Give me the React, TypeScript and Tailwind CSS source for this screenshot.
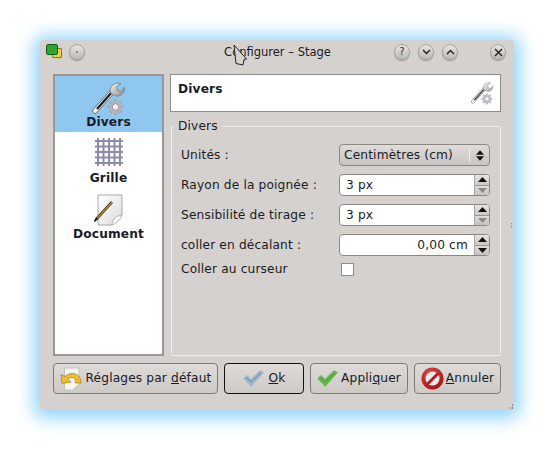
import React from "react";

function WrenchGear({ size = 34, id = "wg" }: { size?: number; id?: string }) {
  return (
    <svg width={size} height={size} viewBox="0 0 34 34" className="block">
      <defs>
        <linearGradient id={id} x1="0" y1="0" x2="1" y2="1">
          <stop offset="0" stopColor="#f4f4f4" />
          <stop offset="1" stopColor="#8e8e8e" />
        </linearGradient>
      </defs>
      <path d="M3 29 L21 9" stroke="#6d6d6d" strokeWidth="5.5" strokeLinecap="round" />
      <path d="M3 29 L21 9" stroke="#f2f2f2" strokeWidth="4" strokeLinecap="round" />
      <path d="M5 27 L20 10" stroke="#1d1d1d" strokeWidth="2.2" />
      <path d="M18.5 11 C17 6 20 1.5 26 1 L29 1.5 L24.5 5 L25.5 8.5 L29.5 9.5 L32 5.5 C33 10 30 14.5 24 14 Z" fill={`url(#${id})`} stroke="#777" strokeWidth="0.8" />
      <g transform="translate(23.5 25)">
        {[0, 45, 90, 135].map((a) => (
          <rect key={a} x="-1.6" y="-8" width="3.2" height="16" fill="#a9a9b3" transform={`rotate(${a})`} />
        ))}
        <circle r="6" fill="#b2b2bb" />
        <circle r="3.2" fill="#f4f4f4" stroke="#8a8a92" strokeWidth="0.8" />
      </g>
    </svg>
  );
}

function GridIcon() {
  const p = [3, 8.5, 14, 19.5, 25];
  return (
    <svg width="28" height="28" viewBox="0 0 28 28" className="block">
      {p.map((v) => (
        <path key={v} d={`M${v} 0V28M0 ${v}H28`} stroke="#8b8baa" strokeWidth="2" />
      ))}
    </svg>
  );
}

function DocIcon() {
  return (
    <svg width="30" height="32" viewBox="0 0 30 32" className="block">
      <defs>
        <linearGradient id="dg" x1="0" y1="0" x2="1" y2="1">
          <stop offset="0" stopColor="#ffffff" />
          <stop offset="1" stopColor="#dcdcdc" />
        </linearGradient>
      </defs>
      <path d="M4 1H28V21L18 31H4Z" fill="url(#dg)" stroke="#a8a8a8" />
      <path d="M18 31C18 26 21 22 28 21C26 26 23 29 18 31Z" fill="#f8f8f8" stroke="#b0b0b0" />
      <path d="M2 25.5L18 8" stroke="#3a3320" strokeWidth="2.6" />
      <path d="M2.5 25L18 8.2" stroke="#d2a52a" strokeWidth="1.1" />
      <path d="M0.5 27.5L3 24" stroke="#111" strokeWidth="1.6" />
    </svg>
  );
}

function UndoIcon() {
  return (
    <svg width="24" height="24" viewBox="0 0 24 24" className="block">
      <path d="M4.5 1H19V17L13 23H4.5Z" fill="#f6f5f2" stroke="#c4c2be" />
      <path d="M21 16C21 9 17 6.5 12 6.5C9 6.5 6.5 8 5 9.5L1 7.5L2 16.5L11 15L7.5 12.5C9 11 10.5 10.5 12 10.5C15 10.5 15.5 13 15.5 16Z" fill="#eebb33" stroke="#a67f18" strokeWidth="0.7" />
    </svg>
  );
}

function Check({ c1, c2, edge }: { c1: string; c2: string; edge: string }) {
  return (
    <svg width="21" height="17" viewBox="0 0 21 17" className="block">
      <path d="M0.8 8.5L4 5.5L8 9.5L17 0.8L20.3 2.5L8.2 16.2Z" fill={c1} stroke={edge} strokeWidth="0.7" />
      <path d="M2.5 8.3L4 7L8 11L17 2.5L18.5 3L8.2 13.5Z" fill={c2} />
    </svg>
  );
}

function StopIcon() {
  return (
    <svg width="23" height="23" viewBox="0 0 23 23" className="block">
      <defs>
        <radialGradient id="sg" cx="0.4" cy="0.3" r="0.8">
          <stop offset="0" stopColor="#e24a4a" />
          <stop offset="1" stopColor="#9c0f0f" />
        </radialGradient>
      </defs>
      <circle cx="11.5" cy="11.5" r="11" fill="url(#sg)" />
      <circle cx="11.5" cy="11.5" r="7" fill="#ececec" />
      <path d="M5.5 16L16 5.5L18 7.5L7.5 18Z" fill="#b41818" />
    </svg>
  );
}

function WinBtn({ children }: { children?: React.ReactNode }) {
  return (
    <div className="w-[16px] h-[16px] rounded-full border border-[#a8a5a1] bg-gradient-to-b from-[#e6e4e1] to-[#bdb9b5] flex items-center justify-center shadow-[0_1px_1px_#9a9794]">
      {children}
    </div>
  );
}

function Tri({ up, dim, w = 9 }: { up?: boolean; dim?: boolean; w?: number }) {
  return (
    <svg width={w} height="5" viewBox="0 0 9 5" className="block">
      <path d={up ? "M4.5 0L9 5H0Z" : "M0 0H9L4.5 5Z"} fill={dim ? "#8c8a88" : "#111"} />
    </svg>
  );
}

function Spin({ value, right, dimDown }: { value: string; right?: boolean; dimDown?: boolean }) {
  return (
    <div className="w-[151px] h-[22px] rounded-[4px] border border-[#8b8884] bg-white flex overflow-hidden">
      <div className={`flex-1 flex items-center ${right ? "justify-end pr-[6px]" : "pl-[6px]"}`}>{value}</div>
      <div className="w-[15px] border-l border-[#a9a6a2] flex flex-col bg-[#d6d2cf]">
        <div className="flex-1 flex items-center justify-center bg-gradient-to-b from-[#e8e6e3] to-[#cbc7c3]">
          <Tri up />
        </div>
        <div className="h-px bg-[#9a9793]" />
        <div className="flex-1 flex items-center justify-center bg-gradient-to-b from-[#dedbd8] to-[#c6c2be]">
          <Tri dim={dimDown} />
        </div>
      </div>
    </div>
  );
}

function Row({ label, children }: { label: string; children: React.ReactNode }) {
  return (
    <div className="h-[22px] flex items-center justify-between">
      <span>{label}</span>
      {children}
    </div>
  );
}

function Btn({ width, dark, children }: { width: string; dark?: boolean; children: React.ReactNode }) {
  return (
    <div className={`${width} h-[31px] rounded-[4px] border ${dark ? "border-[#111]" : "border-[#7f7c78]"} bg-gradient-to-b from-[#dedbd8] to-[#cdc9c5] flex items-center justify-center gap-[2px]`}>
      {children}
    </div>
  );
}

function NavItem({ label, active, children, cls }: { label: string; active?: boolean; children: React.ReactNode; cls: string }) {
  return (
    <div className={`flex flex-col items-center font-bold ${cls} ${active ? "bg-[#8fc7ee]" : ""}`}>
      {children}
      <span className="leading-[15px]">{label}</span>
    </div>
  );
}

export default function App() {
  return (
    <div className="w-[554px] h-[450px] bg-white pt-[40px] pl-[40px] text-[12.2px] tracking-[0.15px] text-[#1b1b26]" style={{ fontFamily: '"DejaVu Sans", sans-serif' }}>
      <div className="relative w-[474px] h-[370px] rounded-[4px] bg-[#d5d1ce] shadow-[0_2px_18px_6px_#8fd3fb] px-[13px] flex flex-col">
        {/* Title bar */}
        <div className="h-[34px] -mx-[6px] flex items-start pt-[3px] relative">
          <div className="w-[16px] h-[16px] relative -ml-[1px] mt-px">
            <div className="absolute left-[6px] top-[4px] w-[10px] h-[10px] bg-[#f0cf4a] border border-[#8a7420] rounded-[1px]" />
            <div className="absolute left-0 top-0 w-[12px] h-[11px] bg-[#2fa52f] border border-[#156015] rounded-[2px]" />
          </div>
          <div className="ml-[7px] mt-px">
            <WinBtn><div className="w-[2px] h-[2px] rounded-full bg-[#777]" /></WinBtn>
          </div>
          <div className="flex-1 text-center text-[11.5px] tracking-normal leading-[16px] ml-[78px] mt-px">Configurer – Stage</div>
          <div className="flex items-center gap-[8px] mt-px ml-[2px]">
            <WinBtn><span className="text-[10px] leading-none text-[#333]">?</span></WinBtn>
            <WinBtn>
              <svg width="9" height="6" viewBox="0 0 9 6"><path d="M1 1L4.5 4.5L8 1" fill="none" stroke="#222" strokeWidth="1.4" /></svg>
            </WinBtn>
            <WinBtn>
              <svg width="9" height="6" viewBox="0 0 9 6"><path d="M1 5L4.5 1.5L8 5" fill="none" stroke="#222" strokeWidth="1.4" /></svg>
            </WinBtn>
            <div className="ml-[24px] mr-[1px]">
              <WinBtn>
                <svg width="9" height="9" viewBox="0 0 9 9"><path d="M1 1L8 8M8 1L1 8" fill="none" stroke="#222" strokeWidth="1.4" /></svg>
              </WinBtn>
            </div>
          </div>
        </div>

        {/* Body */}
        <div className="h-[282px] flex gap-[6px]">
          <div className="w-[111px] border-2 border-[#9a9794] bg-white flex flex-col">
            <NavItem label="Divers" active cls="h-[56px]">
              <div className="pt-[6px] -mb-px"><WrenchGear /></div>
            </NavItem>
            <NavItem label="Grille" cls="">
              <div className="pt-[6px] pb-[5px]"><GridIcon /></div>
            </NavItem>
            <NavItem label="Document" cls="">
              <div className="pt-[8px] pb-[1px]"><DocIcon /></div>
            </NavItem>
          </div>

          <div className="flex-1 flex flex-col">
            <div className="h-[38px] border border-[#8f8c88] bg-white flex justify-between pl-[7px] pr-[6px]">
              <span className="font-bold leading-[15px] mt-[7px]">Divers</span>
              <div className="self-end mb-[6px] opacity-80"><WrenchGear size={23} id="wg2" /></div>
            </div>
            <fieldset className="ml-px mt-[7px] flex-1 border border-[#efedeb] rounded-[2px] pl-[9px] pr-[10px] min-h-0">
              <legend className="-ml-[7px] px-[4px] leading-[14px]">Divers</legend>
              <div className="flex flex-col gap-[8px] mt-[11px]">
                <Row label="Unités :">
                  <div className="w-[151px] h-[22px] rounded-[4px] border border-[#8b8884] bg-gradient-to-b from-[#dfdcd9] to-[#c9c5c1] flex items-center pl-[4px]">
                    <span className="flex-1">Centimètres (cm)</span>
                    <div className="w-[20px] h-[14px] border-l border-[#eeecea] flex flex-col items-center justify-center gap-[1px]">
                      <Tri up w={8} />
                      <Tri w={8} />
                    </div>
                  </div>
                </Row>
                <Row label="Rayon de la poignée :"><Spin value="3 px" dimDown /></Row>
                <Row label="Sensibilité de tirage :"><Spin value="3 px" dimDown /></Row>
                <Row label="coller en décalant :"><Spin value="0,00 cm" right /></Row>
                <div className="h-[14px] -mt-[2px] flex items-center">
                  <span className="w-[160px]">Coller au curseur</span>
                  <div className="w-[13px] h-[13px] border border-[#8f8c88] bg-white" />
                </div>
              </div>
            </fieldset>
          </div>
        </div>

        {/* Buttons */}
        <div className="mt-[7px] flex justify-between">
          <Btn width="w-[165px]">
            <UndoIcon />
            <span>Réglages par <u>d</u>éfaut</span>
          </Btn>
          <Btn width="w-[80px]" dark>
            <Check c1="#a9bdd3" c2="#7e9bba" edge="#8fa4ba" />
            <span className="ml-[3px]"><u>O</u>k</span>
          </Btn>
          <Btn width="w-[98px]">
            <Check c1="#74c254" c2="#4fa535" edge="#4b9a34" />
            <span className="ml-[1px]">Appli<u>q</u>uer</span>
          </Btn>
          <Btn width="w-[87px]">
            <StopIcon />
            <span><u>A</u>nnuler</span>
          </Btn>
        </div>

        {/* Resize grip */}
        <div className="absolute right-[1px] bottom-[1px] w-[5px] h-[5px] grid grid-cols-3 gap-px">
          <span /><span /><span className="bg-[#8a8784]" />
          <span /><span className="bg-[#8a8784]" /><span className="bg-[#8a8784]" />
        </div>
        <div className="absolute right-[2px] top-[183px] flex flex-col gap-px">
          <span className="w-px h-px bg-[#8a8784]" />
          <span className="w-px h-px bg-[#8a8784]" />
          <span className="w-px h-px bg-[#8a8784]" />
        </div>

        {/* Mouse pointer */}
        <svg width="15" height="23" viewBox="0 0 15 23" className="absolute left-[193px] top-[4px]">
          <path d="M1 1L13.5 15L11 15.5L10 21L3 19.5Z" fill="#d7d3d0" stroke="#222" strokeWidth="1" strokeLinejoin="round" />
        </svg>
      </div>
    </div>
  );
}
